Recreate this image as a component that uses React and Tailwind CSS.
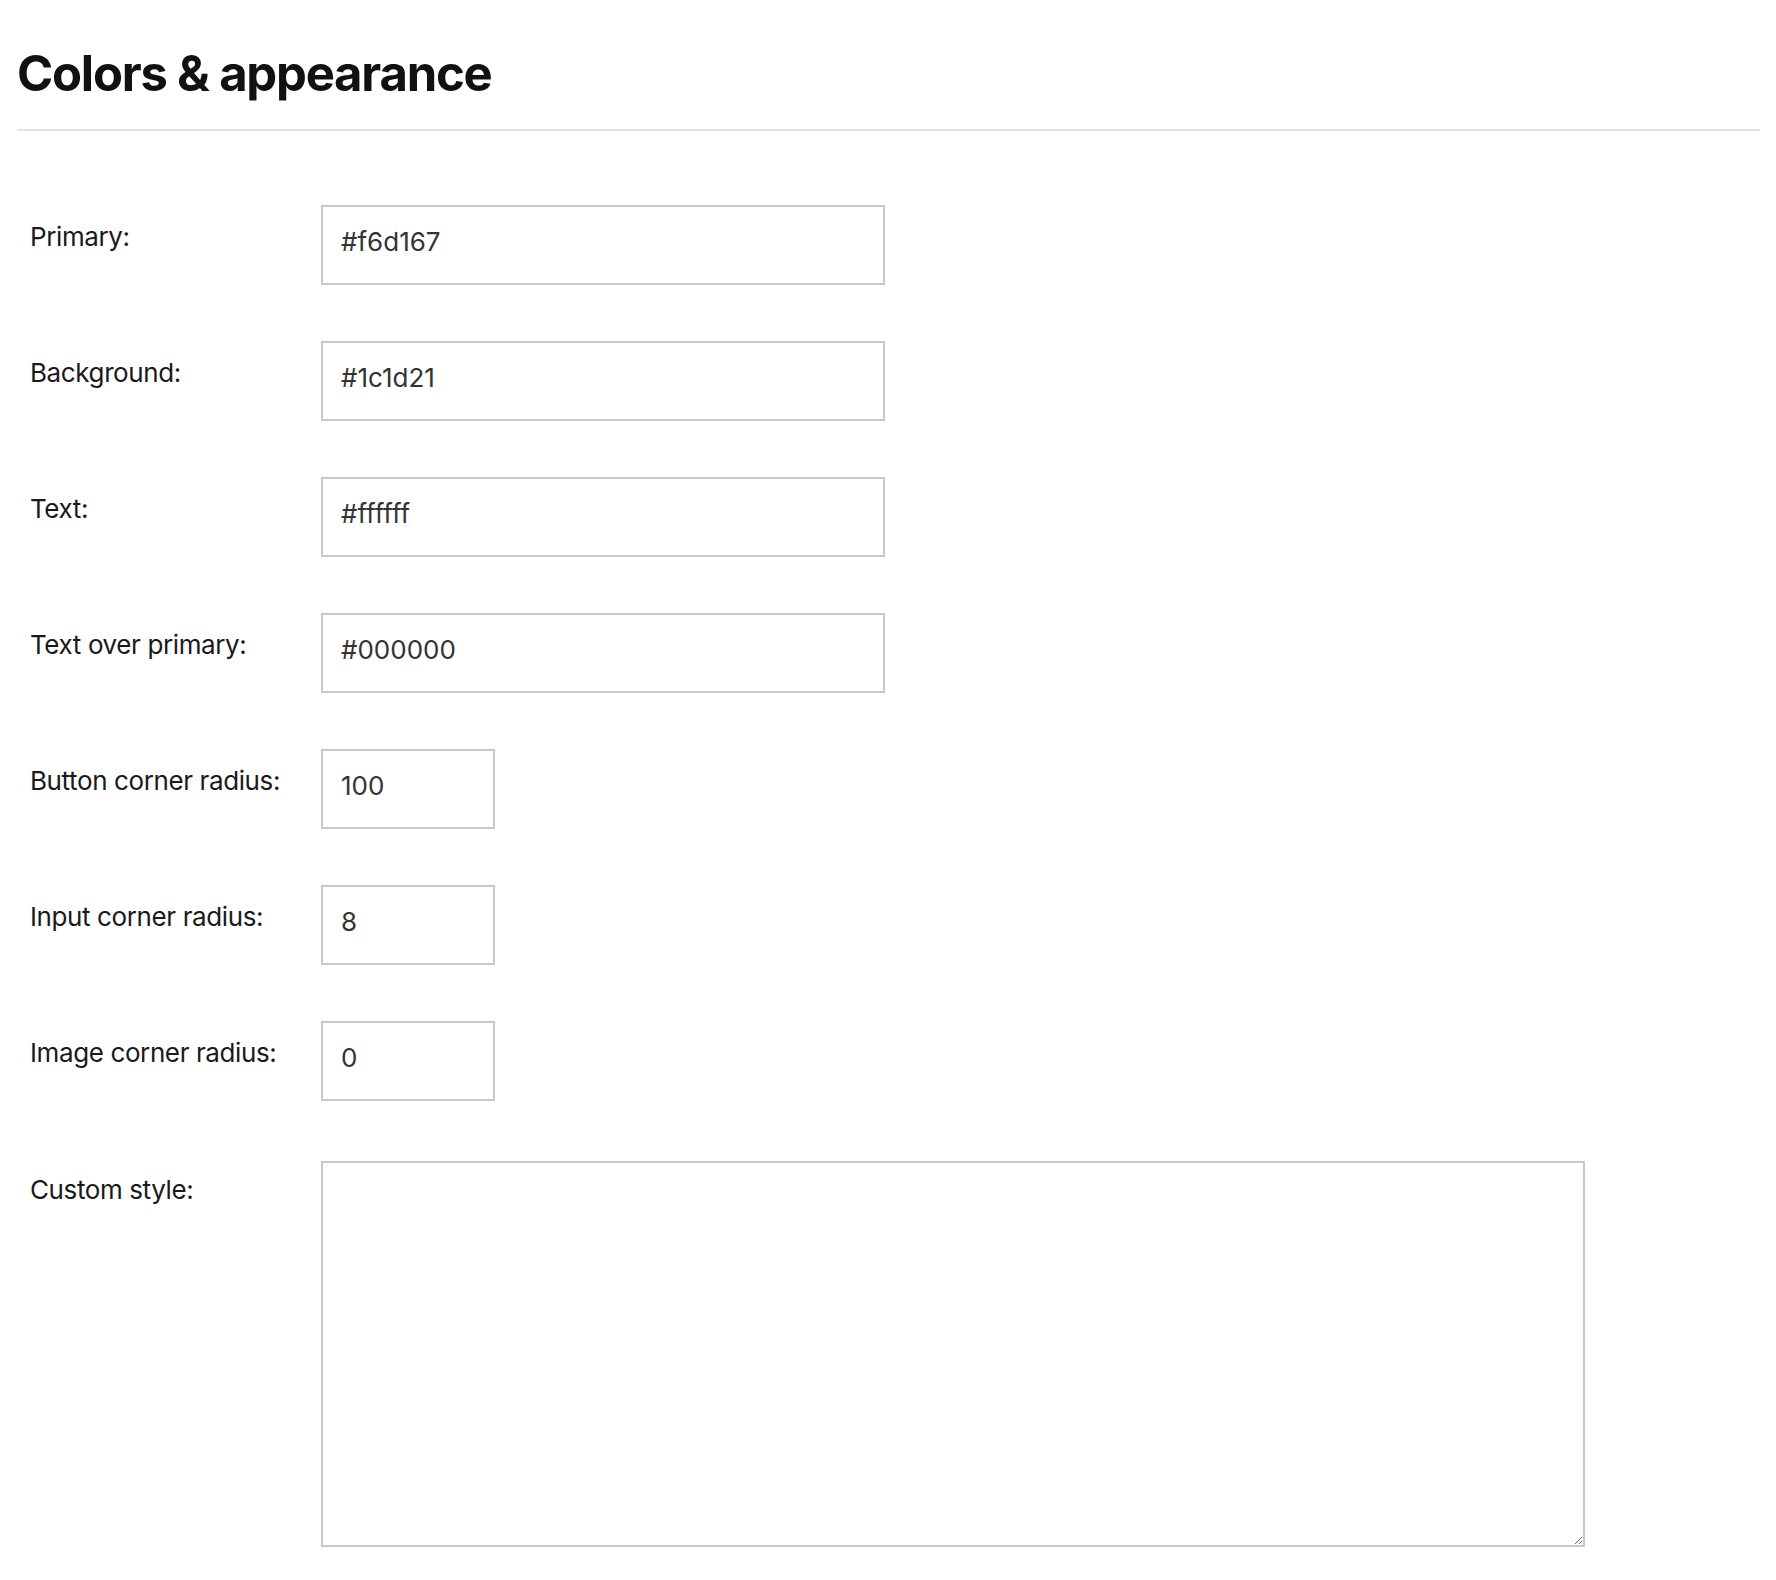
import React from 'react';

const fields = [
    { label: 'Primary:', value: '#f6d167', wide: true },
    { label: 'Background:', value: '#1c1d21', wide: true },
    { label: 'Text:', value: '#ffffff', wide: true },
    { label: 'Text over primary:', value: '#000000', wide: true },
    { label: 'Button corner radius:', value: '100', wide: false },
    { label: 'Input corner radius:', value: '8', wide: false },
    { label: 'Image corner radius:', value: '0', wide: false },
];

const App = () => {
    return (
        <div className="min-h-screen bg-white pl-[17px] pr-[16px] font-['Inter',sans-serif] text-[#1a1a1a]">
            {/* Header */}
            <h1 className="pt-[49px] text-[49px] font-bold leading-none tracking-[-0.025em] text-[#111111]">
                Colors &amp; appearance
            </h1>
            <div className="mt-[31px] h-[2px] w-full bg-[#e2e2e2]"></div>

            {/* Form */}
            <div className="mt-[74px] flex flex-col gap-[56px]">
                {fields.map((f, i) => (
                    <div key={i} className="flex items-start">
                        <label className="w-[304px] shrink-0 pl-[13px] pt-[16px] text-[26px] leading-[32px] tracking-[-0.015em]">
                            {f.label}
                        </label>
                        <input
                            type="text"
                            defaultValue={f.value}
                            className={
                                (f.wide ? 'w-[564px] ' : 'w-[174px] ') +
                                'h-[80px] border-2 border-[#c8c8c8] bg-white px-[18px] pb-[7px] text-[26px] text-[#333333] outline-none'
                            }
                        />
                    </div>
                ))}

                <div className="mt-[4px] flex items-start">
                    <label className="w-[304px] shrink-0 pl-[13px] pt-[13px] text-[26px] leading-[32px] tracking-[-0.015em]">
                        Custom style:
                    </label>
                    <textarea className="h-[386px] w-[1264px] border-2 border-[#c8c8c8] bg-white px-[18px] py-[14px] text-[26px] text-[#333333] outline-none"></textarea>
                </div>
            </div>
        </div>
    );
};

export default App;
